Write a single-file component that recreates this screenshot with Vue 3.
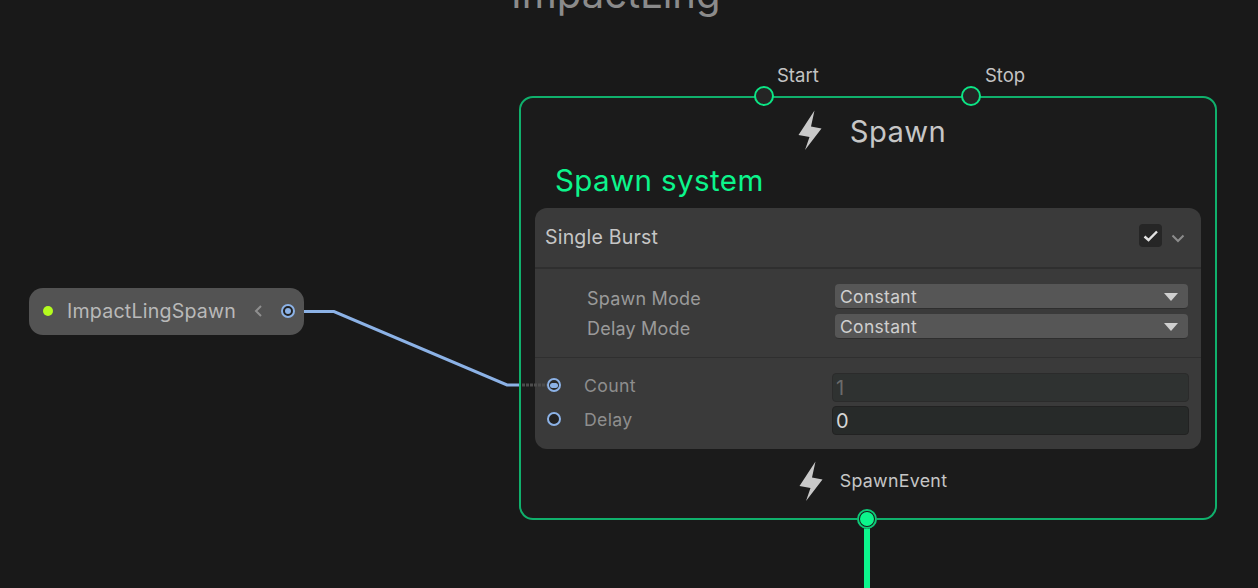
<script setup>
const bolt = "M16.500 0.500 L0.500 25 L11.500 27 L7 40 L23.500 18.500 L13 16.500 Z"
</script>

<template>
  <div class="canvas">
    <div class="graph-title">ImpactLing</div>

    <svg class="wires" width="1258" height="588" viewBox="0 0 1258 588">
      <polyline points="303,311.5 334,311.5 507,385 522,385" fill="none" stroke="#8cb2e6" stroke-width="3" />
      <line x1="867" y1="527" x2="867" y2="588" stroke="#0cf58c" stroke-width="6" />
    </svg>

    <div class="pill">
      <span class="pill-dot"></span>
      <span class="pill-name">ImpactLingSpawn</span>
      <svg class="pill-chev" width="10" height="14" viewBox="0 0 10 14"><path d="M8 2 L3 7 L8 12" fill="none" stroke="#8f8f8f" stroke-width="2" /></svg>
      <span class="port port-out"><i></i></span>
    </div>

    <div class="node">
      <span class="flow-label start-label">Start</span>
      <span class="flow-label stop-label">Stop</span>
      <span class="flow-port start-port"></span>
      <span class="flow-port stop-port"></span>
      <span class="flow-port-out"></span>

      <div class="node-head">
        <svg class="bolt bolt-head" width="24" height="40" viewBox="0 0 24 40"><path :d="bolt" fill="#c9c9c9" /></svg>
        <span class="node-name">Spawn</span>
      </div>
      <div class="node-sub">Spawn system</div>

      <div class="card">
        <div class="card-head">
          <span class="card-title">Single Burst</span>
          <span class="check">
            <svg width="16" height="14" viewBox="0 0 16 14"><path d="M1.500 7.500 L5.500 11 L14 2.500" fill="none" stroke="#e2e2e2" stroke-width="2.400" /></svg>
          </span>
          <svg class="chev" width="14" height="9" viewBox="0 0 14 9"><path d="M1.500 1.500 L7 7 L12.500 1.500" fill="none" stroke="#8c8c8c" stroke-width="2" /></svg>
        </div>
        <div class="card-modes">
          <div class="mode-row">
            <span class="mode-label">Spawn Mode</span>
            <span class="select">Constant<i class="tri"></i></span>
          </div>
          <div class="mode-row">
            <span class="mode-label">Delay Mode</span>
            <span class="select">Constant<i class="tri"></i></span>
          </div>
        </div>
        <div class="card-fields">
          <div class="field-row">
            <span class="port port-in"><i></i></span>
            <span class="field-label">Count</span>
            <span class="input input-off">1</span>
          </div>
          <div class="field-row">
            <span class="port port-empty"></span>
            <span class="field-label">Delay</span>
            <span class="input input-on">0</span>
          </div>
        </div>
      </div>

      <div class="node-foot">
        <svg class="bolt bolt-foot" width="24" height="40" viewBox="0 0 24 40"><path :d="bolt" fill="#c9c9c9" /></svg>
        <span class="foot-name">SpawnEvent</span>
      </div>
    </div>

    <svg class="wires" width="1258" height="588" viewBox="0 0 1258 588">
      <line x1="522" y1="385" x2="547" y2="385" stroke="#4c4c4c" stroke-width="3" stroke-dasharray="3 1" />
    </svg>
  </div>
</template>

<style>
html, body { margin: 0; background: #191919; overflow: hidden; }
</style>

<style scoped>
.canvas {
  position: relative;
  width: 1258px;
  height: 588px;
  overflow: hidden;
  background: #191919;
  font-family: Inter, "Noto Sans", sans-serif;
}
.graph-title {
  position: absolute;
  left: 511px;
  top: -28px;
  font-size: 40px;
  line-height: 44px;
  color: #8b8b8b;
  white-space: nowrap;
}
.wires { position: absolute; left: 0; top: 0; pointer-events: none; }

.pill {
  position: absolute;
  left: 29px;
  top: 288px;
  width: 275px;
  height: 47px;
  box-sizing: border-box;
  display: flex;
  align-items: center;
  padding: 0 0 1px 14px;
  border-radius: 14px;
  background: #535353;
}
.pill-dot { width: 10px; height: 10px; border-radius: 50%; background: #b4fb1e; }
.pill-name { margin-left: 14px; font-size: 19.600px; color: #b9b9b9; letter-spacing: 0.200px; white-space: nowrap; }
.pill-chev { margin-left: 17px; }
.port {
  box-sizing: border-box;
  display: flex;
  align-items: center;
  justify-content: center;
  width: 14px;
  height: 14px;
  border-radius: 50%;
  border: 2px solid #8cb2e6;
  background: #222;
}
.port i { width: 6px; height: 6px; border-radius: 50%; background: #8cb2e6; }
.port-out { margin-left: 18px; }

.node {
  position: absolute;
  left: 519px;
  top: 96px;
  width: 698px;
  height: 424px;
  box-sizing: border-box;
  border: 2px solid #10b06c;
  border-radius: 14px;
  background: #1b1b1b;
  padding: 0 14px;
}
.flow-label { position: absolute; top: -34px; font-size: 18.500px; line-height: 22px; color: #c4c4c4; white-space: nowrap; }
.start-label { left: 256px; }
.stop-label { left: 464px; }
.flow-port {
  position: absolute;
  top: -12px;
  width: 20px;
  height: 20px;
  box-sizing: border-box;
  border: 2px solid #0ce585;
  border-radius: 50%;
  background: #252525;
}
.start-port { left: 233px; }
.stop-port { left: 440px; }
.flow-port-out {
  position: absolute;
  left: 336px;
  top: 411px;
  width: 20px;
  height: 20px;
  box-sizing: border-box;
  border: 3px solid #191919;
  outline: 2px solid #0fc878;
  outline-offset: -2px;
  border-radius: 50%;
  background: #0cf58c;
}
.node-head {
  display: flex;
  justify-content: center;
  align-items: center;
  gap: 28px;
  height: 68px;
  padding-left: 8px;
}
.bolt { display: block; filter: blur(0.6px); }
.bolt-head { margin-top: -4px; }
.bolt-foot { margin-top: 2px; }
.node-name { font-size: 29.200px; line-height: 36px; color: #c6c6c6; letter-spacing: 0.400px; }
.node-sub {
  height: 42px;
  padding-left: 20px;
  font-size: 29.500px;
  line-height: 28px;
  color: #0cf58c;
  letter-spacing: 0.400px;
}
.card {
  height: 241px;
  box-sizing: border-box;
  border-radius: 12px;
  background: #3a3a3a;
  overflow: hidden;
}
.card-head {
  display: flex;
  align-items: center;
  height: 59px;
  padding: 0 16px 0 10px;
  border-bottom: 2px solid #2f2f2f;
}
.card-title { flex: 1; margin-top: -2px; font-size: 19.500px; color: #c6c6c6; letter-spacing: 0.200px; }
.check {
  display: flex;
  align-items: center;
  justify-content: center;
  width: 23px;
  height: 23px;
  margin: -4px 9px 0 0;
  border-radius: 4px;
  background: #262626;
}
.chev { margin-top: 2px; }
.card-modes {
  height: 89px;
  box-sizing: border-box;
  padding: 14px 13px 0 52px;
  border-bottom: 1px solid #2f2f2f;
}
.mode-row { display: flex; align-items: center; height: 30px; }
.mode-label { width: 248px; font-size: 18px; color: #9a9a9a; letter-spacing: 0.200px; }
.select {
  flex: 1;
  position: relative;
  height: 25px;
  box-sizing: border-box;
  margin-bottom: 4px;
  padding-left: 5px;
  border-radius: 4px;
  background: #565656;
  border-bottom: 1px solid #2e2e2e;
  font-size: 17.500px;
  line-height: 25px;
  color: #cfcfcf;
  letter-spacing: 0.300px;
}
.tri {
  position: absolute;
  right: 10px;
  top: 9px;
  width: 0;
  height: 0;
  border-left: 7px solid transparent;
  border-right: 7px solid transparent;
  border-top: 8px solid #d0d0d0;
}
.card-fields { padding: 12px 12px 0 12px; }
.field-row { display: flex; align-items: center; height: 30px; margin-bottom: 4px; }
.port-in { background: #2a2a2a; }
.port-in i { width: 8px; height: 5px; border-radius: 3px; }
.port-empty { background: #222; }
.field-label { width: 248px; margin-left: 23px; font-size: 17.700px; color: #8e8e8e; letter-spacing: 0.300px; }
.input {
  flex: 1;
  height: 29px;
  box-sizing: border-box;
  padding-left: 3px;
  border-radius: 4px;
  background: #272a29;
  border: 1px solid #222;
  font-size: 20px;
  line-height: 29px;
  color: #d6d6d6;
}
.input-on { margin-top: 3px; }
.input-off { margin-top: 5px; background: #2f3231; border-color: #2b2b2b; color: #6b6b6b; }
.node-foot {
  display: flex;
  justify-content: center;
  align-items: center;
  gap: 17px;
  height: 62px;
  padding-left: 10px;
}
.foot-name { font-size: 17.800px; color: #c6c6c6; letter-spacing: 0.300px; }
</style>
